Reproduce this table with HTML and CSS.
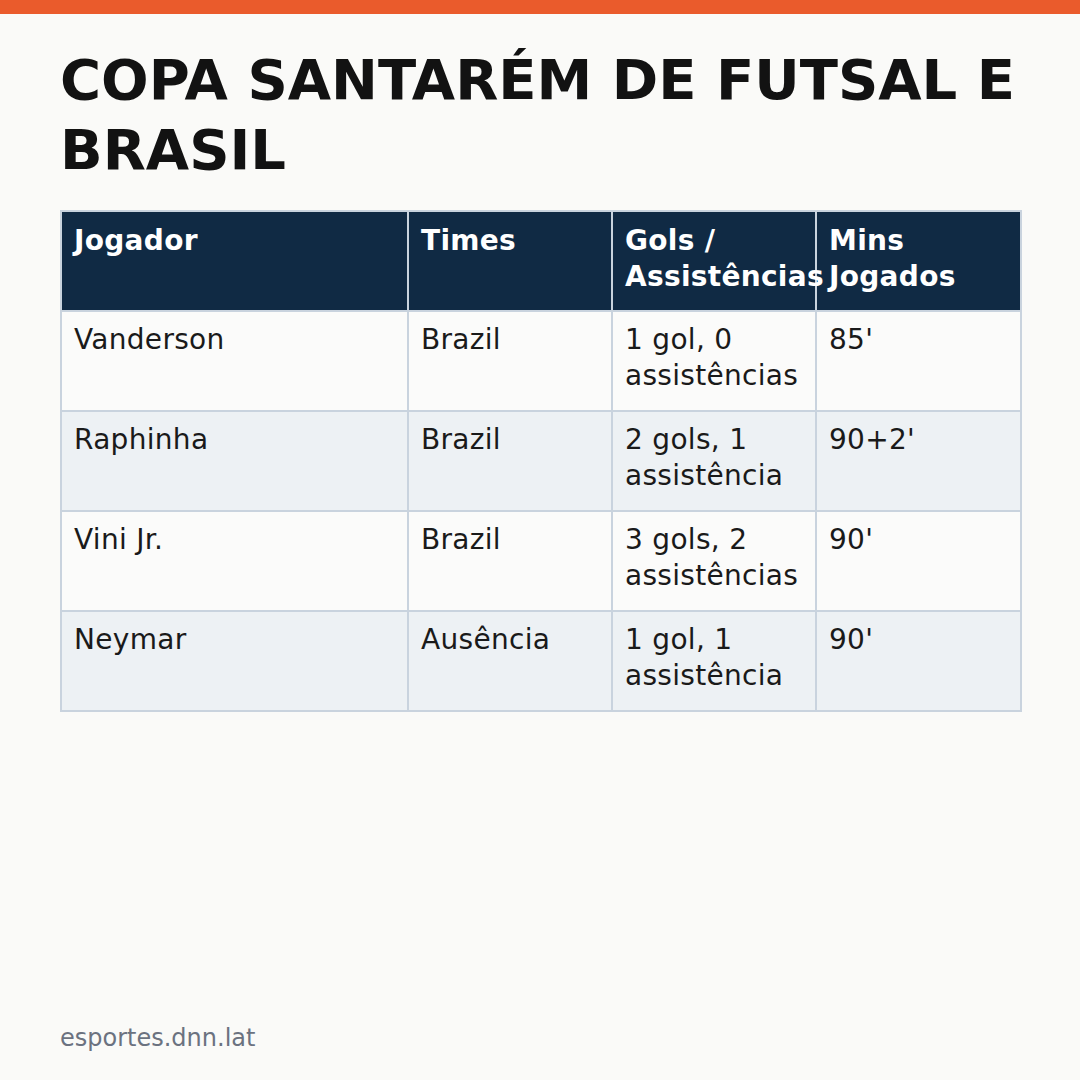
FILE: index.html
```html
<!DOCTYPE html>
<html lang="pt">
<head>
<meta charset="utf-8">
<link rel="stylesheet" href="styles.css">
</head>
<body>
<div class="page">
  <div class="topbar"></div>
  <main class="content">
    <h1 class="title">COPA SANTARÉM DE FUTSAL E BRASIL</h1>
    <table class="stats">
      <colgroup>
        <col class="c1"><col class="c2"><col class="c3"><col class="c4">
      </colgroup>
      <thead>
        <tr><th>Jogador</th><th>Times</th><th>Gols / Assistências</th><th>Mins Jogados</th></tr>
      </thead>
      <tbody>
        <tr><td>Vanderson</td><td>Brazil</td><td>1 gol, 0 assistências</td><td>85'</td></tr>
        <tr><td>Raphinha</td><td>Brazil</td><td>2 gols, 1 assistência</td><td>90+2'</td></tr>
        <tr><td>Vini Jr.</td><td>Brazil</td><td>3 gols, 2 assistências</td><td>90'</td></tr>
        <tr><td>Neymar</td><td>Ausência</td><td>1 gol, 1 assistência</td><td>90'</td></tr>
      </tbody>
    </table>
  </main>
  <footer class="footer">esportes.dnn.lat</footer>
</div>
</body>
</html>
```
FILE: styles.css
```css
html, body {
  margin: 0;
  padding: 0;
}
body {
  background: #fafaf8;
  font-family: "DejaVu Sans", sans-serif;
  color: #1a1a1a;
}
.page {
  width: 1080px;
  height: 1080px;
  display: flex;
  flex-direction: column;
  overflow: hidden;
}
.topbar {
  height: 14px;
  background: #ea5b2c;
  flex: none;
}
.content {
  flex: 1;
  padding: 31px 60px 0 60px;
}
.title {
  margin: 0 0 25px 0;
  font-size: 56px;
  line-height: 70px;
  font-weight: bold;
  color: #121212;
}
.stats {
  width: 960px;
  border-collapse: collapse;
  table-layout: fixed;
  font-size: 28px;
  line-height: 1.3;
  letter-spacing: 0.3px;
}
.c1 { width: 347px; }
.c2 { width: 204px; }
.c3 { width: 204px; }
.c4 { width: 205px; }
.stats th, .stats td {
  border: 2px solid #c9d3de;
  vertical-align: top;
  text-align: left;
  height: 100px;
  box-sizing: border-box;
}
.stats th {
  background: #102a44;
  color: #ffffff;
  font-weight: bold;
  padding: 11px 12px;
  overflow: visible;
}
.stats td {
  padding: 10px 12px;
  color: #1a1a1a;
}
.stats tbody tr:nth-child(odd) td {
  background: #fbfbfa;
}
.stats tbody tr:nth-child(even) td {
  background: #edf1f4;
}
.footer {
  flex: none;
  padding: 0 60px 27px 60px;
  font-size: 24px;
  line-height: 1.2;
  color: #6b7280;
}
```
